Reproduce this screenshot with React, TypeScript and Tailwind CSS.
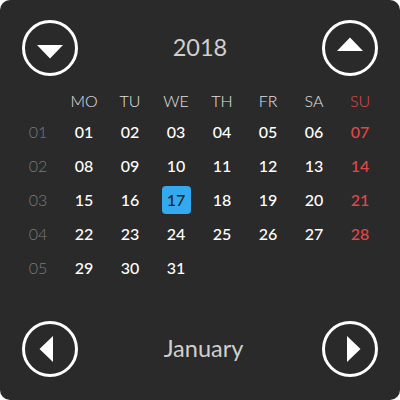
import React from 'react'

type Dir = 'down' | 'up' | 'left' | 'right'

const arrows: Record<Dir, string> = {
  down: '15,25 41,25 28,38.5',
  up: '15,31 41,31 28,17.5',
  left: '31,15 31,41 17.5,28',
  right: '25,15 25,41 38.5,28',
}

const RoundButton: React.FC<{ dir: Dir }> = ({ dir }) => (
  <button className="w-[56px] h-[56px] shrink-0">
    <svg width="56" height="56" viewBox="0 0 56 56">
      <circle cx="28" cy="28" r="26.5" fill="none" stroke="white" strokeWidth="3" />
      <polygon points={arrows[dir]} fill="white" />
    </svg>
  </button>
)

const days = ['MO', 'TU', 'WE', 'TH', 'FR', 'SA', 'SU']

const weeks: (number | null)[][] = [
  [1, 2, 3, 4, 5, 6, 7],
  [8, 9, 10, 11, 12, 13, 14],
  [15, 16, 17, 18, 19, 20, 21],
  [22, 23, 24, 25, 26, 27, 28],
  [29, 30, 31, null, null, null, null],
]

const pad = (n: number) => (n < 10 ? `0${n}` : `${n}`)

export default function App() {
  return (
    <div className="w-[400px] h-[400px] bg-white" style={{ fontFamily: 'Lato, "Open Sans", sans-serif' }}>
      <div className="w-[400px] h-[400px] rounded-[10px] bg-[#2a2a2a] flex flex-col">
        <div className="flex items-center justify-between px-[22px] pt-[20px]">
          <RoundButton dir="down" />
          <span className="text-[23.5px] text-[#cfcfcf] leading-none">2018</span>
          <RoundButton dir="up" />
        </div>

        <div className="grid grid-cols-8 w-[368px] ml-[15px] mt-[10px]">
          <div className="h-[29px]" />
          {days.map(d => (
            <div
              key={d}
              className={`h-[29px] flex items-center justify-center text-[16px] font-light ${d === 'SU' ? 'text-[#e04848]' : 'text-[#e0e0e0]'}`}
            >
              {d}
            </div>
          ))}
          {weeks.map((week, wi) => (
            <React.Fragment key={wi}>
              <div className="h-[34px] flex items-center justify-center text-[16px] font-light text-[#7a7a7a]">
                {pad(wi + 1)}
              </div>
              {week.map((day, di) => (
                <div key={di} className="h-[34px] flex items-center justify-center">
                  {day !== null && (
                    <span
                      className={`text-[16px] font-medium leading-none ${
                        day === 17
                          ? 'bg-[#33aaef] text-[#1e1e1e] rounded-[4px] w-[29px] h-[28px] flex items-center justify-center'
                          : di === 6
                          ? 'text-[#e04848]'
                          : 'text-white'
                      }`}
                    >
                      {pad(day)}
                    </span>
                  )}
                </div>
              ))}
            </React.Fragment>
          ))}
        </div>

        <div className="mt-auto flex items-center justify-between px-[22px] pb-[23px]">
          <RoundButton dir="left" />
          <span className="text-[23.5px] text-[#cfcfcf] leading-none ml-[7px]">January</span>
          <RoundButton dir="right" />
        </div>
      </div>
    </div>
  )
}
